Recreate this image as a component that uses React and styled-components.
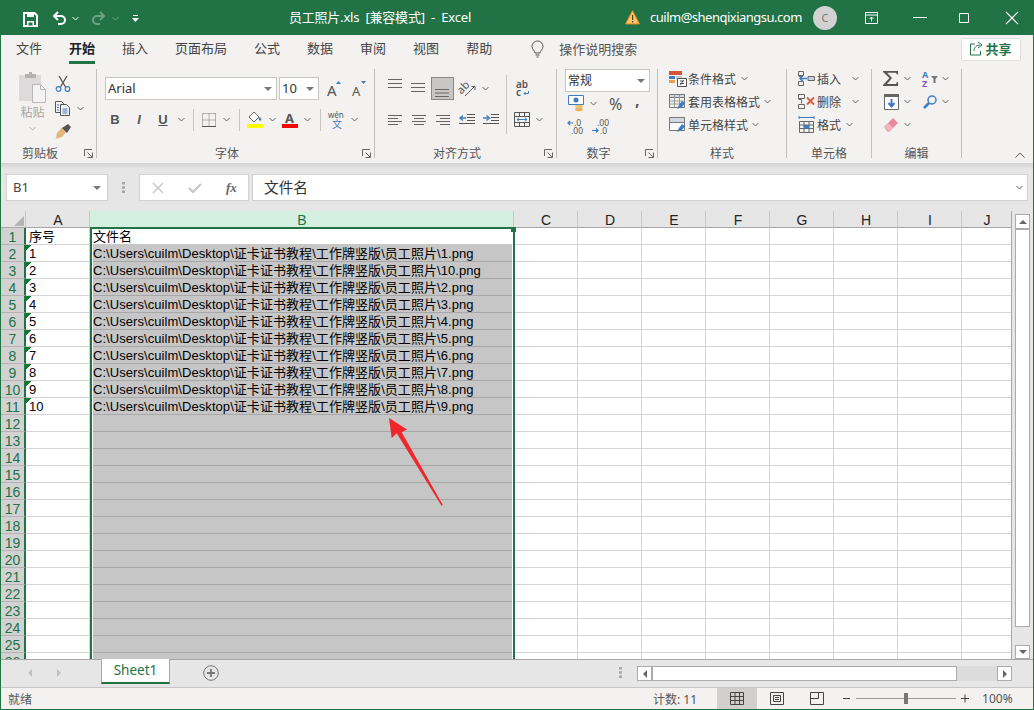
import React from 'react';
import styled, { createGlobalStyle } from 'styled-components';

const GREEN = '#217346';
const FONT = '"Noto Sans", "Noto Sans CJK SC", sans-serif';
const CELLFONT = '"Liberation Sans", "Noto Sans CJK SC", sans-serif';

const Global = createGlobalStyle`
  html, body { margin: 0; padding: 0; overflow: hidden; background: #e6e6e6; }
  * { box-sizing: border-box; }
  svg { overflow: visible; }
`;

const Win = styled.div`
  width: 1034px; height: 710px; display: flex; flex-direction: column; position: relative;
  border: 1px solid ${GREEN}; border-top: 0; font-family: ${FONT}; color: #444; overflow: hidden;
`;
const TitleBar = styled.header`
  height: 35px; flex: none; background: ${GREEN}; color: #fff; display: flex; align-items: center;
  font-size: 13px; white-space: pre;
`;
const Slot = styled.span`
  display: flex; align-items: center; justify-content: ${p => p.$start ? 'flex-start' : 'center'}; flex: none;
  width: ${p => p.$w ? p.$w + 'px' : 'auto'}; margin-left: ${p => p.$ml || 0}px; margin-top: ${p => p.$mt || 0}px;
`;
const Title = styled.div` margin-left: ${p => p.$ml}px; width: ${p => p.$w}px; flex: none; margin-top: -2px; letter-spacing: -0.22px; `;
const Email = styled.span` margin-left: 10px; flex: none; margin-top: -2px; letter-spacing: -0.5px; `;
const Avatar = styled.div`
  width: 24px; height: 24px; border-radius: 50%; background: #d2d2d2; color: #777; font-size: 11px;
  display: flex; align-items: center; justify-content: center; margin-left: 11px; flex: none;
`;
const TabsRow = styled.nav`
  height: 30px; flex: none; background: #f3f2f1; display: flex; align-items: center; padding-left: 15px; font-size: 13px;
`;
const Tab = styled.div`
  height: 28px; line-height: 24px; margin: -1px 27px 0 0; flex: none; color: ${p => p.$on ? '#222' : '#444'};
  font-weight: ${p => p.$on ? 700 : 400};
  border-bottom: 3px solid ${p => p.$on ? GREEN : 'transparent'};
`;
const Search = styled.div` display: flex; align-items: center; gap: 15px; margin: -2px 0 0 12px; color: #555; line-height: 24px; `;
const Share = styled.button`
  margin: -2px 12px 0 auto; width: 60px; height: 23px; background: #fff; border: 1px solid #e1dfdd; border-radius: 2px;
  display: flex; align-items: center; justify-content: center; gap: 1px; padding: 0 0 2px; font: 700 13px ${FONT}; color: ${GREEN};
`;
const Ribbon = styled.section`
  height: 98px; flex: none; background: #f3f2f1; display: flex; padding: 4px 0 5px;
`;
const Group = styled.div`
  width: ${p => p.$w}px; flex: none; display: flex; flex-direction: column; border-right: 1px solid #c2c0be;
`;
const GroupBody = styled.div`
  height: 76px; display: flex; padding-left: ${p => p.$pl || 0}px; padding-top: ${p => p.$pt || 0}px;
  flex-direction: ${p => p.$col ? 'column' : 'row'}; font-size: 12px; color: #444; margin-top: ${p => p.$mt || 0}px;
`;
const GroupFoot = styled.div`
  height: 13px; display: grid; grid-template-columns: 1fr auto 1fr; align-items: end; font-size: 12px; color: #555; line-height: 13px;
  margin-top: ${p => p.$mt || 0}px; padding-right: ${p => p.$launch ? 17 : 0}px;
  & > span:first-child { grid-column: 2; white-space: nowrap; position: relative; top: 2px; }
  & > svg { justify-self: end; margin-right: -14px; }
`;
const RibbonEnd = styled.div`
  flex: 1; display: flex; align-items: flex-end; justify-content: flex-end; padding-right: 8px;
`;
const Col = styled.div`
  display: flex; flex-direction: column; align-items: ${p => p.$center ? 'center' : 'flex-start'}; flex: none;
  width: ${p => p.$w ? p.$w + 'px' : 'auto'}; margin-left: ${p => p.$ml || 0}px; margin-top: ${p => p.$mt || 0}px;
`;
const Row = styled.div`
  display: flex; align-items: center; flex: none; height: ${p => p.$h || 23}px; margin-top: ${p => p.$mt || 0}px; white-space: nowrap;
  padding-left: ${p => p.$pl || 0}px; margin-left: ${p => p.$ml || 0}px;
`;
const PasteText = styled.div` font-size: 12px; color: #a8a6a4; line-height: 17px; margin-top: 1px; `;
const Field = styled.div`
  width: ${p => p.$w}px; height: ${p => p.$h || 23}px; margin-left: ${p => p.$ml || 0}px; background: #fff; border: 1px solid #c8c6c4; flex: none;
  display: flex; align-items: center; justify-content: space-between; padding: 0 4px 0 2px; font-size: ${p => p.$fs || 13}px; color: #333;
  & > span { position: relative; top: -1px; }
`;
const Glyph = styled.span`
  width: 24px; text-align: center; flex: none; font: ${p => p.$i ? 'italic ' : ''}700 13px "Liberation Sans", sans-serif; color: #555;
  text-decoration: ${p => p.$u ? 'underline' : 'none'};
`;
const NumGlyph = styled.span`
  font: ${p => p.$b ? 700 : 400} 16px "Noto Sans", sans-serif; color: #555; flex: none; display: block; width: ${p => p.$w}px; margin-left: ${p => p.$ml || 0}px;
  margin-top: ${p => p.$mt || 0}px;
`;
const VDiv = styled.i`
  display: block; width: 1px; height: ${p => p.$h || 22}px; background: #c8c6c4; flex: none; margin: ${p => p.$mt || 0}px ${p => p.$mr ?? 8}px 0 ${p => p.$ml ?? 7}px;
`;
const Pressed = styled.span`
  width: 23px; height: 23px; flex: none; background: #c8c6c4; border: 1px solid #8a8886; display: flex; align-items: center; justify-content: center;
`;

const FormulaBar = styled.section`
  height: 48px; flex: none; padding: 11px 5px 0 5px; display: flex; align-items: flex-start;
  background: linear-gradient(#d2d2d2, #e6e6e6 6px);
`;
const NameBox = styled.div`
  width: 102px; height: 27px; background: #fff; border: 1px solid #d4d2d0; display: flex; align-items: center; justify-content: space-between;
  padding: 0 6px; font-size: 13px; color: #444; flex: none;
  & > span { position: relative; top: -1px; }
`;
const Dots = styled.div` width: 31px; height: 27px; display: flex; align-items: center; justify-content: center; flex: none; `;
const FxBox = styled.div`
  width: 110px; height: 27px; background: #fff; border: 1px solid #d4d2d0; display: flex; align-items: center; flex: none; padding-left: 12px; gap: 24px; margin-right: 3px;
`;
const FxText = styled.span` font: italic 700 13px "Liberation Serif", serif; color: #666; `;
const FormulaInput = styled.div`
  flex: 1; height: 27px; background: #fff; border: 1px solid #d4d2d0; display: flex; align-items: center; justify-content: space-between;
  padding: 0 3px 0 11px; font-size: 14.67px; color: #333;
  & > span { position: relative; top: -1px; }
`;

const SheetArea = styled.section` flex: 1; min-height: 0; display: flex; `;
const GridWrap = styled.div`
  position: relative; width: 1011px; flex: none; overflow: hidden; background: #fff; border-right: 1px solid #a6a6a6;
`;
const Grid = styled.div`
  display: grid; grid-template-columns: 25px 64px 424px repeat(6, 64px) 64px 50px; grid-auto-rows: 17px;
  font: 13px ${CELLFONT}; color: #000;
`;
const Corner = styled.div`
  background: #e6e6e6; border-bottom: 1px solid #a6a6a6; border-right: 1px solid #c8c8c8; display: flex; align-items: flex-end; justify-content: flex-end; padding: 0 1px 1px 0;
`;
const ColHead = styled.div`
  background: ${p => p.$on ? '#d3f0e0' : '#e6e6e6'}; color: ${p => p.$on ? GREEN : '#222'}; font-size: 14px; text-align: center; line-height: 18px;
  border-bottom: 1px solid #a6a6a6; border-right: 1px solid #c8c8c8; padding-left: 1px;
`;
const RowHead = styled.div`
  background: #d2d2d2; color: ${GREEN}; font-size: 14px; text-align: center; line-height: 18px;
  border-bottom: 1px solid #b4b4b4; border-right: 2px solid ${GREEN}; overflow: hidden;
`;
const Cell = styled.div`
  border-bottom: 1px solid #d4d4d4; border-right: 1px solid #d4d4d4; line-height: 18px; padding-left: 3px; white-space: nowrap; overflow: hidden;
  background: ${p => p.$tri ? `linear-gradient(135deg, #0a7a30 0 4px, transparent 4px)` : 'none'};
`;
const SelCell = styled.div`
  line-height: 18px; padding-left: 3px; white-space: nowrap; overflow: hidden; letter-spacing: 0.06px;
  background: ${p => p.$active ? '#fff' : '#c6c6c6'}; border-bottom: 1px solid ${p => p.$active ? '#c6c6c6' : '#a8a8a8'};
`;
const Selection = styled.div`
  position: absolute; left: 89px; top: 16px; width: 425px; bottom: -3px; border: 2px solid ${GREEN};
  box-shadow: inset 0 0 0 1px #fff; pointer-events: none;
`;
const Handle = styled.div`
  position: absolute; right: -3px; top: -2px; width: 5px; height: 5px; background: ${GREEN};
`;
const Arrow = styled.svg` position: absolute; left: -1px; top: -211px; pointer-events: none; `;
const VScroll = styled.div`
  width: 21px; flex: none; background: #e6e6e6; padding: 3px 0 0 3px; display: flex; flex-direction: column;
`;
const ScrollBtn = styled.div`
  width: ${p => p.$w || 15}px; height: ${p => p.$ht || 15}px; background: #fff; border: 1px solid #ababab; display: flex; align-items: center; justify-content: center; flex: none;
`;
const VThumb = styled.div` width: 15px; height: 398px; background: #fff; border: 1px solid #ababab; flex: none; `;
const VGap = styled.div` flex: 1; `;
const TabBar = styled.section`
  height: 28px; flex: none; background: #e6e6e6; border-top: 1px solid #a6a6a6; display: flex; align-items: flex-start;
`;
const SheetTab = styled.div`
  width: 69px; height: 25px; background: #fff; border: 1px solid #a6a6a6; border-top: 0; border-bottom: 2px solid ${GREEN}; color: ${GREEN}; font-size: 13.5px;
  text-align: center; line-height: 22px; margin-left: ${p => p.$ml}px; flex: none; margin-top: -1px;
`;
const HScroll = styled.div`
  margin-left: 15px; margin-top: 6px; width: 375px; height: 15px; display: flex; background: #dcdcdc; flex: none;
`;
const HThumb = styled.div` width: 305px; height: 15px; background: #fff; border: 1px solid #ababab; flex: none; `;
const StatusBar = styled.footer`
  height: 22px; flex: none; background: #f3f2f1; border-top: 1px solid #c8c6c4; display: flex; align-items: center; font-size: 12px; color: #555; padding-left: 7px;
`;
const ViewBtn = styled.div`
  width: 40px; height: 100%; background: ${p => p.$on ? '#d2d0ce' : 'transparent'}; display: flex; align-items: center; justify-content: center; flex: none;
  margin-left: ${p => p.$ml || 0}px;
`;
const SliderTrack = styled.div`
  width: 100px; height: 1px; background: #9c9c9c; position: relative; flex: none; margin-left: 6px;
`;
const SliderThumb = styled.div` position: absolute; left: 48px; top: -5px; width: 4px; height: 11px; background: #777; `;
const Plain = styled.span` margin-left: ${p => p.$ml || 0}px; flex: none; `;

/* ---- icons ---- */
const Chev = ({ c = '#666', w = 7 }) => (
  <svg width={w} height="5" viewBox="0 0 7 5"><path d="M.5 1 3.500 4 6.500 1" fill="none" stroke={c} /></svg>
);
const Down = ({ c = '#777' }) => (<svg width="8" height="4" viewBox="0 0 8 4"><path d="M0 0h8L4 4z" fill={c} /></svg>);
const Launcher = () => (
  <svg width="9" height="9" viewBox="0 0 9 9" fill="none" stroke="#666"><path d="M.5 7V.5H8M8.500 8.500V3.500M8.500 8.500H3.500M8 8 3.500 3.500" /></svg>
);
const SaveI = () => (
  <svg width="15" height="15" viewBox="0 0 15 15"><path d="M1 1h10.500L14 3.500V14H1z" fill="none" stroke="#fff" strokeWidth="2" /><path d="M4 1h7v4H4zM4 9h7v5H4z" fill="#fff" /><path d="M5.500 10.500h4v3h-4z" fill={GREEN} /></svg>
);
const UndoI = () => (
  <svg width="15" height="14" viewBox="0 0 15 14" fill="none" stroke="#fff" strokeWidth="2"><path d="M6 1 2 5l4 4M2 5h7a4 4 0 0 1 0 8H6" /></svg>
);
const RedoI = () => (
  <svg width="15" height="14" viewBox="0 0 15 14" opacity=".35" fill="none" stroke="#fff" strokeWidth="2"><path d="M9 1l4 4-4 4M13 5H6a4 4 0 0 0 0 8h3" /></svg>
);
const CustomI = () => (<svg width="7" height="8" viewBox="0 0 7 8" fill="#fff"><path d="M1 0h5v1H1zM0 3h7L3.500 7z" /></svg>);
const WarnI = () => (
  <svg width="15" height="15" viewBox="0 0 15 15"><path d="M7.500 .5 14.500 14H.5z" fill="#f7c66b" stroke="#e2811e" /><path d="M7 5h1.200v5H7zM7 11h1.200v1.400H7z" fill="#5a3a10" /></svg>
);
const RibbonModeI = () => (
  <svg width="13" height="12" viewBox="0 0 13 12" fill="none" stroke="#fff"><path d="M.5.500h12v11H.5zM.5 3h12M6.500 9.500V5M4.500 7l2-2 2 2" /></svg>
);
const MinI = () => (<svg width="14" height="1"><path d="M0 .5h14" stroke="#fff" /></svg>);
const MaxI = () => (<svg width="10" height="10"><path d="M.5.500h9v9h-9z" fill="none" stroke="#fff" /></svg>);
const CloseI = () => (<svg width="14" height="14"><path d="M1 1l12 12M13 1 1 13" stroke="#fff" strokeWidth="1.100" /></svg>);
const BulbI = () => (
  <svg width="13" height="17" viewBox="0 0 13 17" fill="none" stroke="#555"><path d="M4 12c0-2-3-3.500-3-6.500a5.500 5.500 0 0 1 11 0C12 8.500 9 10 9 12zM4.500 14h4M5.500 16h2" /></svg>
);
const ShareI = () => (
  <svg width="14" height="15" viewBox="0 0 14 15" fill="none" stroke={GREEN}><path d="M5 3H.5v11h10v-4M4 10c0-4 3-6 6-6M8 1l4 3-4 3" /></svg>
);
const PasteI = () => (
  <svg width="29" height="31" viewBox="0 0 29 31">
    <path d="M1 3h22v26H1z" fill="#dcdadb" /><path d="M7 2h4V0h3v2h4v4H7z" fill="#b4b2b3" />
    <path d="M14.500 12.500h8l5 5v13h-13z" fill="#f4f3f4" stroke="#b9b7b8" /><path d="M22.500 12.500v5h5" fill="none" stroke="#b9b7b8" />
  </svg>
);
const ScissorsI = () => (
  <svg width="16" height="16" viewBox="0 0 16 16" fill="none"><path d="M4 0l6.500 11M12 0 5.500 11" stroke="#555" strokeWidth="1.300" /><circle cx="3.500" cy="13" r="2.300" stroke="#3f7cbf" strokeWidth="1.200" /><circle cx="12.500" cy="13" r="2.300" stroke="#3f7cbf" strokeWidth="1.200" /></svg>
);
const CopyI = () => (
  <svg width="15" height="15" viewBox="0 0 15 15" fill="none" stroke="#555"><path d="M.5.500h6l2 2v9h-8z" fill="#f3f2f1" /><path d="M5.500 3.500h6l3 3v8h-9z" fill="#f3f2f1" /><path d="M2 4h2M2 6.500h2M2 9h2M7.500 8h5M7.500 10h5M7.500 12h5" stroke="#3f7cbf" /></svg>
);
const BrushI = () => (
  <svg width="16" height="16" viewBox="0 0 16 16"><path d="M7 3.500 11 8 7 13 0 15c2-1 1-3 2-6z" fill="#e3b778" /><path d="M7 4l6-4 3 3-4 6z" fill="#555" /></svg>
);
const GrowI = ({ up }) => (
  <svg width="15" height="16" viewBox="0 0 15 16"><text x="0" y="15" fontSize={up ? 15 : 13} fontFamily="Noto Sans" fill="#555">A</text><path d={up ? 'M9 3 11.500 0 14 3z' : 'M9 0h5l-2.500 3z'} fill="#3f7cbf" /></svg>
);
const BordersI = () => (
  <svg width="14" height="14" viewBox="0 0 14 14" fill="none"><path d="M.5.500h13M.5.500v13M13.500.500v13M7 .5v13M.5 7h13" stroke="#777" strokeDasharray="1 1" /><path d="M0 13.500h14" stroke="#555" /></svg>
);
const FillI = () => (
  <svg width="16" height="17" viewBox="0 0 16 17"><path d="M7 1 12 6 7 11 2 6z" fill="#fff" stroke="#666" /><path d="M12 6c2 1 3 2.500 2 3.500S11 9 12 6z" fill="#3f7cbf" /><path d="M0 13h16v4H0z" fill="#ffff00" /></svg>
);
const ColorAI = () => (
  <svg width="16" height="17" viewBox="0 0 16 17"><text x="3" y="12" fontSize="13" fontWeight="700" fontFamily="Noto Sans" fill="#555">A</text><path d="M0 13h16v4H0z" fill="#f00" /></svg>
);
const WenI = () => (
  <svg width="18" height="18" viewBox="0 0 18 18"><text x="0" y="7" fontSize="8" fontFamily="Noto Sans" fill="#555">wén</text><text x="4" y="17" fontSize="10" fontFamily="Noto Sans CJK SC" fill="#3f7cbf">文</text></svg>
);
const LinesI = ({ rows }) => (
  <svg width="15" height="21" viewBox="0 1 15 21" fill="none" stroke="#666"><path d={rows} /></svg>
);
const OrientI = () => (
  <svg width="18" height="17" viewBox="0 0 18 17"><text x="0" y="11" fontSize="11" fontFamily="Noto Sans" fill="#555" transform="rotate(-45 6 9)">ab</text><path d="M7 16 17 6M13.500 6.500H17V10" stroke="#555" fill="none" /></svg>
);
const IndentI = ({ right }) => (
  <svg width="16" height="11" viewBox="0 0 16 11" fill="none"><path d="M8 .5h8M8 3.500h8M8 6.500h8M0 9.500h16" stroke="#555" /><path d={right ? 'M0 4h5M3.500 1.500 6.500 4l-3 2.500' : 'M7 4H2M4 1.500 1 4l3 2.500'} stroke="#3f7cbf" strokeWidth="1.400" /></svg>
);
const WrapI = () => (
  <svg width="14" height="17" viewBox="0 0 14 17"><text x="0" y="8" fontSize="10" fontWeight="600" fontFamily="Noto Sans" fill="#555">ab</text><text x="0" y="16" fontSize="10" fontWeight="600" fontFamily="Noto Sans" fill="#555">c</text><path d="M12.500 11v2.500H8M9.500 12 8 13.500 9.500 15" fill="none" stroke="#3f7cbf" /></svg>
);
const MergeI = () => (
  <svg width="16" height="15" viewBox="0 0 16 15" fill="none"><path d="M.5.500h15v14H.5zM.5 4.500h15M.5 10.500h15M5.500.500v4M10.500.500v4M5.500 10.500v4M10.500 10.500v4" stroke="#555" /><path d="M3 7.500h10M5 5.800 3 7.500 5 9.200M11 5.800 13 7.500 11 9.200" stroke="#3f7cbf" /></svg>
);
const CurrencyI = () => (
  <svg width="17" height="17" viewBox="0 0 17 17"><path d="M.5.500h15v9H.5z" fill="#fff" stroke="#3f7cbf" /><circle cx="8" cy="5" r="2.500" fill="#3f7cbf" /><ellipse cx="11" cy="11.500" rx="4" ry="1.800" fill="#e9c27a" /><ellipse cx="11" cy="14.500" rx="4" ry="1.800" fill="#e9b45e" /></svg>
);
const DecI = ({ inc }) => (
  <svg width="17" height="14" viewBox="0 0 17 14">
    <text x={inc ? 5 : 7} y="6" fontSize="8.500" fontFamily="Noto Sans" fill="#555">{inc ? '.00' : '.0'}</text>
    <text x={inc ? 8 : 4} y="13.500" fontSize="8.500" fontFamily="Noto Sans" fill="#555">{inc ? '.0' : '.00'}</text>
    <path d={inc ? 'M0 10.500h6M4 8.500l2 2-2 2' : 'M6 3H1M3 1 1 3l2 2'} fill="none" stroke="#3f7cbf" strokeWidth="1.200" />
  </svg>
);
const CondI = () => (
  <svg width="18" height="16" viewBox="0 0 18 16"><path d="M0 0h13v4H0z" fill="#d4553a" /><path d="M0 5h6v3H0z" fill="#3f7cbf" /><path d="M0 9h6v3H0z" fill="#e9a24f" /><path d="M7 5h6v3H7z" fill="#c9c9c9" /><path d="M8.500 7.500h9v8h-9z" fill="#fff" stroke="#555" /><path d="M11 10h4M11 12.500h4M14.500 9l-3 5" stroke="#555" fill="none" /></svg>
);
const TableFmtI = ({ cell }) => (
  <svg width="17" height="16" viewBox="0 0 17 16" fill="none"><path d="M.5.500h15v13H.5z" stroke="#777" fill={cell ? '#fff' : '#f3f2f1'} /><path d={cell ? 'M.5.500h15v5H.5z' : 'M.5.500h15v3H.5z'} fill="#d0d8e6" stroke="#777" />{!cell && <path d="M5.500.500v13M10.500.500v13M.5 7h15M.5 10h15" stroke="#999" />}<path d="M8 15l2-4 3-4 3 2-3 4z" fill="#3f7cbf" /></svg>
);
const CellInsI = () => (
  <svg width="17" height="16" viewBox="0 0 17 16" fill="none" stroke="#666"><path d="M.5.500h5v4h-5zM.5 10.500h5v4h-5zM.5 5.500h3v4" /><path d="M10 5.500h6.500v4H10z" fill="#c7d3e4" /><path d="M9 7.500H2M5 4.500 2 7.500l3 3" stroke="#3f7cbf" strokeWidth="1.500" /></svg>
);
const CellDelI = () => (
  <svg width="17" height="16" viewBox="0 0 17 16" fill="none" stroke="#666"><path d="M.5.500h6v4h-6zM.5 10.500h6v4h-6zM.5 5.500h3v4" /><path d="M9 3.500l7 7M16 3.500l-7 7" stroke="#d9593d" strokeWidth="1.800" /></svg>
);
const CellFmtI = () => (
  <svg width="17" height="17" viewBox="0 0 17 17" fill="none" stroke="#666"><path d="M1.500 5.500h14v11h-14zM1.500 9h14M1.500 12.500h14M6 5.500v11M11 5.500v11" /><path d="M6 9h5v3.500H6z" fill="#3f7cbf" stroke="none" /><path d="M1 1.500h15M1 0v3M16 0v3" stroke="#3f7cbf" /></svg>
);
const SigmaI = () => (
  <svg width="16" height="15" viewBox="0 0 16 15"><path d="M0 0h15v3.500h-1L13 1.800H4L9 7l-5 6h9l1-2h1v4H0v-1l6.500-7L0 1z" fill="#555" /></svg>
);
const FillDownI = () => (
  <svg width="15" height="16" viewBox="0 0 15 16"><path d="M.5.500h14v15H.5z" fill="#fff" stroke="#666" /><path d="M0 0h15v3H0z" fill="#666" /><path d="M7.500 5v7M4.500 9l3 3.500 3-3.500" fill="none" stroke="#3f7cbf" strokeWidth="2" /></svg>
);
const EraserI = () => (
  <svg width="14" height="14" viewBox="0 0 14 14"><path d="M9 0l5 5-8 8-2 1L0 9z" fill="#e88a9a" /><path d="M0 9l4-4 5 5-4 3.500z" fill="#f3b3be" /></svg>
);
const SortI = () => (
  <svg width="16" height="17" viewBox="0 0 16 17"><text x="0" y="8" fontSize="9" fontWeight="700" fontFamily="Noto Sans" fill="#3f7cbf">A</text><text x="0" y="17" fontSize="9" fontWeight="700" fontFamily="Noto Sans" fill="#8e52b5">Z</text><path d="M9 6h7l-2.500 3v4h-2V9z" fill="#777" /></svg>
);
const FindI = () => (
  <svg width="14" height="14" viewBox="0 0 14 14" fill="none"><circle cx="9" cy="5" r="4" stroke="#3f7cbf" strokeWidth="1.500" /><path d="M6 8l-5 5" stroke="#3f7cbf" strokeWidth="2.500" /></svg>
);
const CollapseI = () => (<svg width="10" height="6" viewBox="0 0 10 6"><path d="M.5 5.500 5 1l4.500 4.500" fill="none" stroke="#555" /></svg>);
const XI = () => (<svg width="12" height="12"><path d="M1 1l10 10M11 1 1 11" stroke="#c4c4c4" strokeWidth="1.400" /></svg>);
const CheckI = () => (<svg width="14" height="12"><path d="M1 6l4 4 8-8" fill="none" stroke="#c4c4c4" strokeWidth="2" /></svg>);
const CornerI = () => (<svg width="10" height="10"><path d="M10 0v10H0z" fill="#b4b4b4" /></svg>);
const VDots = () => (<svg width="3" height="11" fill="#a8a8a8"><path d="M0 0h3v2.500H0zM0 4.200h3v2.500H0zM0 8.400h3v2.500H0z" /></svg>);
const TriL = ({ c = '#666' }) => (<svg width="4" height="8"><path d="M4 0v8L0 4z" fill={c} /></svg>);
const TriR = ({ c = '#666' }) => (<svg width="4" height="8"><path d="M0 0v8l4-4z" fill={c} /></svg>);
const TriU = () => (<svg width="8" height="4"><path d="M0 4h8L4 0z" fill="#666" /></svg>);
const AddI = () => (
  <svg width="16" height="16" viewBox="0 0 16 16" fill="none" stroke="#777"><circle cx="8" cy="8" r="7.300" /><path d="M4 8h8M8 4v8" strokeWidth="1.800" /></svg>
);
const NormalI = () => (<svg width="14" height="13" fill="none" stroke="#444"><path d="M.5.500h13v12H.5zM.5 4.500h13M.5 8.500h13M5 .5v12M9.500 .5v12" /></svg>);
const PageI = () => (<svg width="14" height="13" fill="none" stroke="#444"><path d="M.5.500h13v12H.5zM3.500 3.500h7v6h-7zM5 5.500h4M5 7.500h4" /></svg>);
const BreakI = () => (<svg width="14" height="13" fill="none" stroke="#444"><path d="M.5.500h13v12H.5zM8.500.500v6H.5" /></svg>);
const MinusI = () => (<svg width="7" height="1"><path d="M0 .5h7" stroke="#444" /></svg>);
const PlusI = () => (<svg width="8" height="9"><path d="M0 4.500h8M4 .5v8" stroke="#444" /></svg>);

const Style = ({ icon, label, ml = 4 }) => (
  <Row>
    <Slot $w={19} $start>{icon}</Slot>
    <span>{label}</span>
    <Slot $ml={ml}><Chev /></Slot>
  </Row>
);

const COLS = ['C', 'D', 'E', 'F', 'G', 'H', 'I', 'J'];
const PREFIX = 'C:\\Users\\cuilm\\Desktop\\证卡证书教程\\工作牌竖版\\员工照片\\';
const FILES = ['1', '10', '2', '3', '4', '5', '6', '7', '8', '9'];

export default function App() {
  const rows = Array.from({ length: 26 }, (_, i) => i + 1);
  return (
    <Win>
      <Global />
      <TitleBar>
        <Slot $ml={22} $mt={3}><SaveI /></Slot>
        <Slot $ml={14} $mt={1}><UndoI /></Slot>
        <Slot $ml={5} $mt={1}><Chev c="#fff" /></Slot>
        <Slot $ml={12} $mt={1}><RedoI /></Slot>
        <Slot $ml={6} $mt={1}><Chev c="#6fa587" /></Slot>
        <Slot $ml={13} $mt={2}><CustomI /></Slot>
        <Title $ml={150} $w={336}>{'员工照片.xls  [兼容模式]  -  Excel'}</Title>
        <WarnI />
        <Email>cuilm@shenqixiangsu.com</Email>
        <Avatar>C</Avatar>
        <Slot $ml={28}><RibbonModeI /></Slot>
        <Slot $ml={35}><MinI /></Slot>
        <Slot $ml={32}><MaxI /></Slot>
        <Slot $ml={36}><CloseI /></Slot>
      </TitleBar>
      <TabsRow>
        <Tab>文件</Tab>
        <Tab $on>开始</Tab>
        <Tab>插入</Tab>
        <Tab>页面布局</Tab>
        <Tab>公式</Tab>
        <Tab>数据</Tab>
        <Tab>审阅</Tab>
        <Tab>视图</Tab>
        <Tab>帮助</Tab>
        <Search><BulbI /><span>操作说明搜索</span></Search>
        <Share><ShareI />共享</Share>
      </TabsRow>
      <Ribbon>
        <Group $w={96}>
          <GroupBody $pl={17}>
            <Col $w={29} $center $mt={3}>
              <PasteI />
              <PasteText>粘贴</PasteText>
              <Row $h={14}><Chev c="#b0b0b0" /></Row>
            </Col>
            <Col $ml={8} $mt={3}>
              <Row $h={24}><ScissorsI /></Row>
              <Row $h={24}><CopyI /><Slot $ml={7}><Chev /></Slot></Row>
              <Row $h={24}><BrushI /></Row>
            </Col>
          </GroupBody>
          <GroupFoot $launch><span>剪贴板</span><Launcher /></GroupFoot>
        </Group>
        <Group $w={278}>
          <GroupBody $col $pl={8} $pt={8}>
            <Row>
              <Field $w={172}><span>Arial</span><Down /></Field>
              <Field $w={40} $ml={2}><span>10</span><Down /></Field>
              <Slot $ml={8}><GrowI up /></Slot>
              <Slot $ml={10}><GrowI /></Slot>
            </Row>
            <Row $mt={8} $ml={-2}>
              <Glyph>B</Glyph>
              <Glyph $i>I</Glyph>
              <Glyph $u>U</Glyph>
              <Slot $w={12}><Chev /></Slot>
              <VDiv $ml={6} $mr={8} />
              <BordersI />
              <Slot $w={21}><Chev /></Slot>
              <VDiv $ml={2} $mr={7} />
              <FillI />
              <Slot $w={19}><Chev /></Slot>
              <ColorAI />
              <Slot $w={19}><Chev /></Slot>
              <VDiv $ml={3} $mr={7} />
              <WenI />
              <Slot $w={16}><Chev /></Slot>
            </Row>
          </GroupBody>
          <GroupFoot $launch><span>字体</span><Launcher /></GroupFoot>
        </Group>
        <Group $w={182}>
          <GroupBody $pl={8}>
            <Col $w={123} $mt={8}>
              <Row>
                <Slot $w={24}><LinesI rows="M0 2.500h14M0 6.500h14M0 10.500h14" /></Slot>
                <Slot $w={23}><LinesI rows="M0 6.500h14M0 10.500h14M0 14.500h14" /></Slot>
                <Slot $w={25}><Pressed><LinesI rows="M0 12.500h14M0 16h14M0 19.500h14" /></Pressed></Slot>
                <Slot $w={24}><OrientI /></Slot>
                <Slot $w={12}><Chev /></Slot>
              </Row>
              <Row $mt={8}>
                <Slot $w={24}><LinesI rows="M0 7.500h14M0 10.500h10M0 13.500h14M0 16.500h10" /></Slot>
                <Slot $w={24}><LinesI rows="M0 7.500h14M2 10.500h10M0 13.500h14M2 16.500h10" /></Slot>
                <Slot $w={24}><LinesI rows="M0 7.500h14M4 10.500h10M0 13.500h14M4 16.500h10" /></Slot>
                <Slot $w={24}><IndentI /></Slot>
                <Slot $w={24}><IndentI right /></Slot>
              </Row>
            </Col>
            <VDiv $h={59} $ml={0} $mr={7} $mt={6} />
            <Col $mt={8}>
              <Row><Slot $w={18}><WrapI /></Slot></Row>
              <Row $mt={8}><MergeI /><Slot $ml={6}><Chev /></Slot></Row>
            </Col>
          </GroupBody>
          <GroupFoot $launch><span>对齐方式</span><Launcher /></GroupFoot>
        </Group>
        <Group $w={101}>
          <GroupBody $col $pl={8}>
            <Field $w={85} $h={23} $fs={12}><span>常规</span><Down /></Field>
            <Row $pl={3}>
              <CurrencyI />
              <Slot $ml={5}><Chev /></Slot>
              <NumGlyph $w={14} $ml={12}>%</NumGlyph>
              <NumGlyph $w={8} $ml={12} $b $mt={-7}>,</NumGlyph>
            </Row>
            <Row $pl={2}>
              <DecI />
              <Slot $ml={8}><DecI inc /></Slot>
            </Row>
          </GroupBody>
          <GroupFoot $launch><span>数字</span><Launcher /></GroupFoot>
        </Group>
        <Group $w={129}>
          <GroupBody $col $pl={11} $mt={-2}>
            <Style icon={<CondI />} label="条件格式" ml={5} />
            <Style icon={<TableFmtI />} label="套用表格格式" />
            <Style icon={<TableFmtI cell />} label="单元格样式" />
          </GroupBody>
          <GroupFoot $mt={2}><span>样式</span></GroupFoot>
        </Group>
        <Group $w={85}>
          <GroupBody $col $pl={11} $mt={-2}>
            <Style icon={<CellInsI />} label="插入" ml={11} />
            <Style icon={<CellDelI />} label="删除" ml={11} />
            <Style icon={<CellFmtI />} label="格式" ml={5} />
          </GroupBody>
          <GroupFoot $mt={2}><span>单元格</span></GroupFoot>
        </Group>
        <Group $w={90}>
          <GroupBody $col $pl={11} $mt={-2}>
            <Row><Slot $w={16}><SigmaI /></Slot><Slot $ml={5}><Chev /></Slot><Slot $ml={11}><SortI /></Slot><Slot $ml={4}><Chev /></Slot></Row>
            <Row><Slot $w={16}><FillDownI /></Slot><Slot $ml={5}><Chev /></Slot><Slot $ml={11} $w={16}><FindI /></Slot><Slot $ml={4}><Chev /></Slot></Row>
            <Row><Slot $w={16}><EraserI /></Slot><Slot $ml={5}><Chev /></Slot></Row>
          </GroupBody>
          <GroupFoot $mt={2}><span>编辑</span></GroupFoot>
        </Group>
        <RibbonEnd><CollapseI /></RibbonEnd>
      </Ribbon>
      <FormulaBar>
        <NameBox><span>B1</span><Down /></NameBox>
        <Dots><VDots /></Dots>
        <FxBox><XI /><CheckI /><FxText>fx</FxText></FxBox>
        <FormulaInput><span>文件名</span><Chev c="#555" w={9} /></FormulaInput>
      </FormulaBar>
      <SheetArea>
        <GridWrap>
          <Grid>
            <Corner><CornerI /></Corner>
            <ColHead>A</ColHead>
            <ColHead $on>B</ColHead>
            {COLS.map(c => <ColHead key={c}>{c}</ColHead>)}
            {rows.map(r => (
              <React.Fragment key={r}>
                <RowHead>{r}</RowHead>
                <Cell $tri={r >= 2 && r <= 11}>{r === 1 ? '序号' : r <= 11 ? r - 1 : ''}</Cell>
                <SelCell $active={r === 1}>{r === 1 ? '文件名' : r <= 11 ? `${PREFIX}${FILES[r - 2]}.png` : ''}</SelCell>
                {COLS.map(c => <Cell key={c} />)}
              </React.Fragment>
            ))}
          </Grid>
          <Selection><Handle /></Selection>
          <Arrow width="600" height="600" viewBox="0 0 600 600">
            <path d="M389 418 407 429.500 401.700 432.300 442.800 505 441.500 505.800 396.700 433.300 391.700 438.300z" fill="#f0262c" />
          </Arrow>
        </GridWrap>
        <VScroll>
          <ScrollBtn><TriU /></ScrollBtn>
          <VThumb />
          <VGap />
          <ScrollBtn $ht={14}><Down c="#666" /></ScrollBtn>
        </VScroll>
      </SheetArea>
      <TabBar>
        <Slot $ml={27} $mt={9}><TriL c="#c0c0c0" /></Slot>
        <Slot $ml={25} $mt={9}><TriR c="#c0c0c0" /></Slot>
        <SheetTab $ml={40}>Sheet1</SheetTab>
        <Slot $ml={33} $mt={5}><AddI /></Slot>
        <Slot $ml={400} $mt={7}><VDots /></Slot>
        <HScroll>
          <ScrollBtn><TriL /></ScrollBtn>
          <HThumb />
          <VGap />
          <ScrollBtn><TriR /></ScrollBtn>
        </HScroll>
      </TabBar>
      <StatusBar>
        <span>就绪</span>
        <Plain $ml={621}>计数: 11</Plain>
        <ViewBtn $on $ml={20}><NormalI /></ViewBtn>
        <ViewBtn><PageI /></ViewBtn>
        <ViewBtn><BreakI /></ViewBtn>
        <Slot $ml={6}><MinusI /></Slot>
        <SliderTrack><SliderThumb /></SliderTrack>
        <Slot $ml={5}><PlusI /></Slot>
        <Plain $ml={13}>100%</Plain>
      </StatusBar>
    </Win>
  );
}
